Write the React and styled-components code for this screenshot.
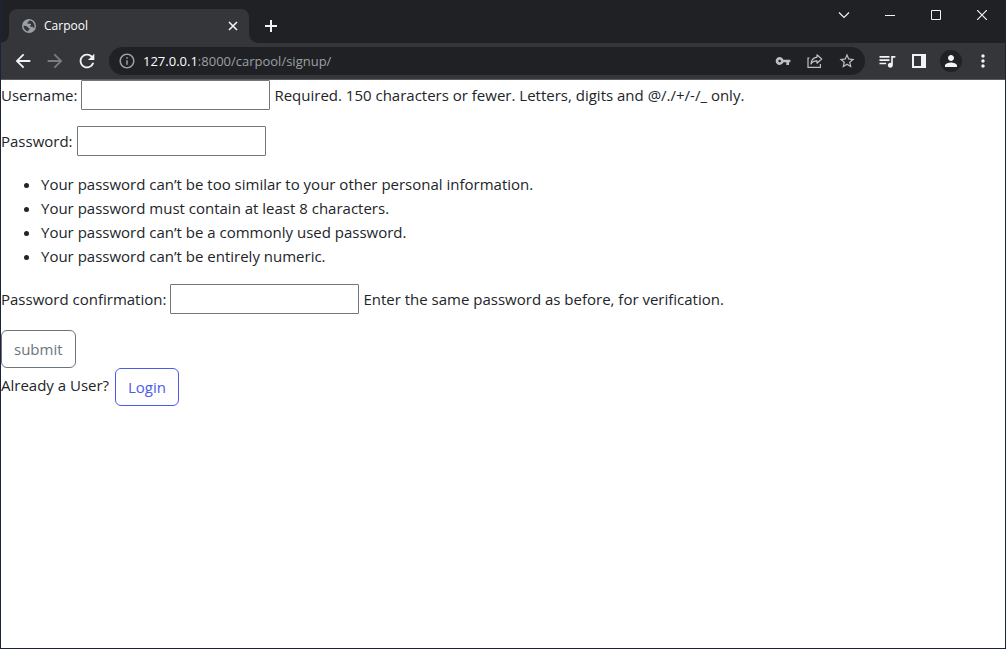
import React from "react";
import styled, { createGlobalStyle } from "styled-components";
import { MdArrowBack, MdArrowForward, MdRefresh, MdInfoOutline, MdVpnKey, MdStarOutline, MdQueueMusic, MdPerson, MdMoreVert } from "react-icons/md";

const GlobalStyle = createGlobalStyle`
  *, *::before, *::after { box-sizing: border-box; }
  body {
    margin: 0;
    background: #fff;
    color: #212529;
    font-family: "Segoe UI", "Open Sans", "Noto Sans", sans-serif;
    font-size: 15px;
    line-height: 24px;
  }
`;

const Window = styled.div`
  display: flex;
  flex-direction: column;
  min-height: 100vh;
  border: solid #19243a;
  border-width: 0 1px 1px;
`;

const TabStrip = styled.header`
  display: flex;
  align-items: flex-end;
  height: 43px;
  padding-left: 8px;
  background: #202124;
`;

const Tab = styled.div`
  position: relative;
  display: flex;
  align-items: center;
  gap: 8px;
  width: 240px;
  height: 34px;
  padding: 0 9px 0 13px;
  border-radius: 8px 8px 0 0;
  background: #35363a;
  color: #fff;
  font-size: 12px;

  &::before,
  &::after {
    content: "";
    position: absolute;
    bottom: 0;
    width: 8px;
    height: 8px;
  }
  &::before {
    right: 100%;
    background: radial-gradient(circle at 0 0, transparent 7px, #35363a 8px);
  }
  &::after {
    left: 100%;
    background: radial-gradient(circle at 100% 0, transparent 7px, #35363a 8px);
  }
`;

const TabTitle = styled.span`
  flex: 1;
`;

const IconButton = styled.button`
  display: flex;
  align-items: center;
  justify-content: center;
  flex: none;
  width: ${({ $width = 32 }) => $width}px;
  height: ${({ $height = 28 }) => $height}px;
  padding: 0;
  border: 0;
  background: none;
  color: ${({ $color = "#f1f3f4" }) => $color};
`;

const WindowControls = styled.div`
  display: flex;
  align-self: flex-start;
  margin-left: auto;
`;

const Toolbar = styled.nav`
  display: flex;
  align-items: center;
  height: 37px;
  padding: 0 6px;
  border-bottom: 1px solid #5b5c60;
  background: #35363a;
`;

const AddressBar = styled.div`
  display: flex;
  align-items: center;
  flex: 1;
  height: 28px;
  margin: 0 6px;
  padding: 0 2px;
  border-radius: 14px;
  background: #202124;
`;

const Address = styled.div`
  flex: 1;
  color: #9aa0a6;
  font-size: 13px;
`;

const Host = styled.span`
  color: #fff;
`;

const Avatar = styled.span`
  display: flex;
  align-items: center;
  justify-content: center;
  width: 22px;
  height: 22px;
  border-radius: 50%;
  background: #202124;
`;

const Page = styled.main`
  flex: 1;
  background: #fff;
`;

const Field = styled.div`
  display: flex;
  align-items: center;
  gap: 4px;
  margin-bottom: 16px;
`;

const TextInput = styled.input`
  width: 189px;
  height: 30px;
  padding: 1px 2px;
  border: 1px solid #767676;
  border-radius: 1px;
  font: inherit;
`;

const Rules = styled.ul`
  margin: 0 0 16px;
  padding-left: 40px;
`;

const outline = `
  display: inline-block;
  height: 38px;
  padding: 6px 12px;
  border-radius: 6px;
  background: #fff;
  font: inherit;
  text-decoration: none;
  vertical-align: middle;
`;

const SubmitButton = styled.button`
  ${outline}
  display: block;
  border: 1px solid #6c757d;
  color: #6c757d;
`;

const LoginLink = styled.a`
  ${outline}
  margin-left: 2px;
  border: 1px solid #4d5bea;
  color: #4d5bea;
`;

const Stroke = ({ size, d, width = 1 }) => (
  <svg width={size} height={size} viewBox={`0 0 ${size} ${size}`} fill="none" stroke="currentColor" strokeWidth={width}>
    <path d={d} />
  </svg>
);

const Globe = () => (
  <svg width="14" height="14" viewBox="0 0 14 14">
    <circle cx="7" cy="7" r="7" fill="#9aa0a6" />
    <path d="M7.7 1.5C6.4 2 6.2 2.7 6.4 3.3c-1 .2-1 .8-.9 1.5h3c.8 0 .8 1.4 0 1.6-.6.2-.7.8-.3 1.2.7.6 2.1-.1 2.7.4.5.5.6 1.2 1.3.9.4-1.5.4-3.3-.6-4.7C10.700 2.600 9.300 1.600 7.700 1.500ZM1.500 6.800c1.600-.1 3 .1 4 .9.600.500.300 1.200 1.200 1.300.900.100 1.100.500.800 1.200-.200.500-.900.600-1.100 1.100-.100.400-.200.900-.200 1.200C3.400 12 1.500 9.700 1.500 6.800Z" fill="#35363a" />
  </svg>
);

const Share = () => (
  <svg width="16" height="16" viewBox="0 0 16 16" fill="none" stroke="currentColor" strokeWidth="1.2">
    <path d="M2.500 5H1v9.400h12.400V11" />
    <path d="M10 1.800 14.700 6 10 10.200V7.900C7.200 7.800 5.300 8.700 4 11c.2-3.700 2-6.300 6-6.800Z" strokeLinejoin="round" />
  </svg>
);

const SidePanel = () => (
  <svg width="14" height="14" viewBox="0 0 14 14" fill="currentColor" fillRule="evenodd">
    <path d="M0 0h14v14H0ZM2 2v10h7V2Z" />
  </svg>
);

const rules = [
  "Your password can’t be too similar to your other personal information.",
  "Your password must contain at least 8 characters.",
  "Your password can’t be a commonly used password.",
  "Your password can’t be entirely numeric.",
];

const FormField = ({ id, label, type = "text", help }) => (
  <Field>
    <label htmlFor={id}>{label}</label>
    <TextInput id={id} name={id} type={type} />
    {help && <span>{help}</span>}
  </Field>
);

export default function App() {
  return (
    <>
      <GlobalStyle />
      <Window>
        <TabStrip>
          <Tab>
            <Globe />
            <TabTitle>Carpool</TabTitle>
            <IconButton $width={14} aria-label="Close tab">
              <Stroke size={10} width={1.6} d="M1 1 9 9M9 1 1 9" />
            </IconButton>
          </Tab>
          <IconButton $width={44} $height={34} aria-label="New tab">
            <Stroke size={12} width={2} d="M6 0V12M0 6H12" />
          </IconButton>
          <WindowControls>
            <IconButton $width={46} $height={30} aria-label="Search tabs">
              <Stroke size={12} width={1.2} d="M1 3.500 6 8.500 11 3.500" />
            </IconButton>
            <IconButton $width={46} $height={30} aria-label="Minimize">
              <Stroke size={10} d="M0 5.500H10" />
            </IconButton>
            <IconButton $width={46} $height={30} aria-label="Maximize">
              <Stroke size={10} d="M.5.5H9.500V9.500H.5Z" />
            </IconButton>
            <IconButton $width={46} $height={30} aria-label="Close">
              <Stroke size={10} d="M0 0 10 10M10 0 0 10" width={1.2} />
            </IconButton>
          </WindowControls>
        </TabStrip>
        <Toolbar>
          <IconButton aria-label="Back"><MdArrowBack size={22} /></IconButton>
          <IconButton aria-label="Forward" $color="#7c7d80"><MdArrowForward size={22} /></IconButton>
          <IconButton aria-label="Reload"><MdRefresh size={22} /></IconButton>
          <AddressBar>
            <IconButton aria-label="Site information" $color="#9aa0a6"><MdInfoOutline size={18} /></IconButton>
            <Address><Host>127.0.0.1</Host>:8000/carpool/signup/</Address>
            <IconButton aria-label="Passwords" $color="#bdc1c6"><MdVpnKey size={16} /></IconButton>
            <IconButton aria-label="Share" $color="#bdc1c6"><Share /></IconButton>
            <IconButton aria-label="Bookmark" $color="#bdc1c6"><MdStarOutline size={18} /></IconButton>
          </AddressBar>
          <IconButton aria-label="Media"><MdQueueMusic size={20} /></IconButton>
          <IconButton aria-label="Side panel"><SidePanel /></IconButton>
          <IconButton aria-label="Profile"><Avatar><MdPerson size={18} /></Avatar></IconButton>
          <IconButton aria-label="Menu"><MdMoreVert size={20} /></IconButton>
        </Toolbar>
        <Page>
          <form onSubmit={(event) => event.preventDefault()}>
            <FormField id="username" label="Username:" help="Required. 150 characters or fewer. Letters, digits and @/./+/-/_ only." />
            <FormField id="password1" type="password" label="Password:" />
            <Rules>
              {rules.map((rule) => <li key={rule}>{rule}</li>)}
            </Rules>
            <FormField id="password2" type="password" label="Password confirmation:" help="Enter the same password as before, for verification." />
            <SubmitButton>submit</SubmitButton>
          </form>
          <div>
            Already a User? <LoginLink href="#login">Login</LoginLink>
          </div>
        </Page>
      </Window>
    </>
  );
}
